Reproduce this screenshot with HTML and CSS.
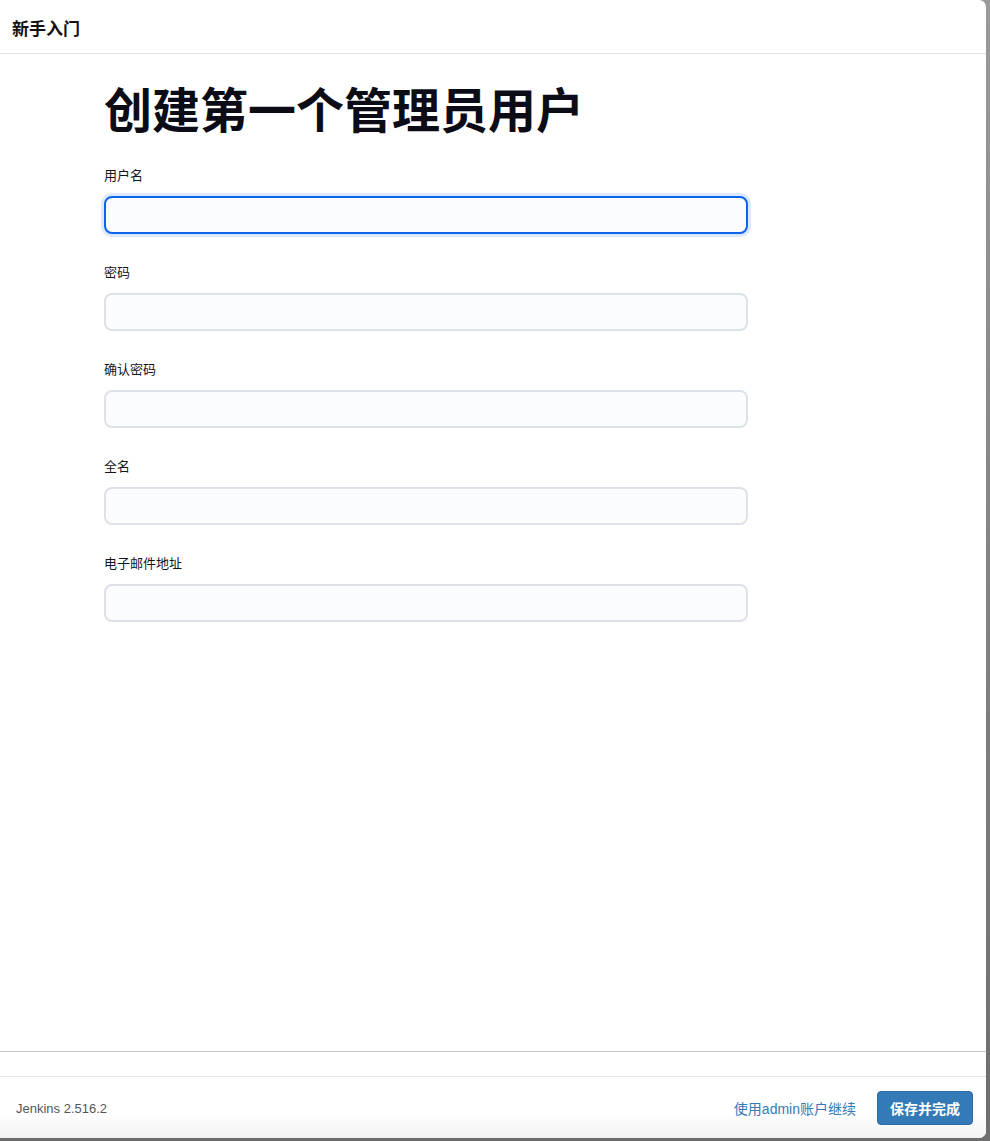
FILE: index.html
```html
<!DOCTYPE html>
<html lang="zh-CN">
<head>
<meta charset="utf-8">
<title>新手入门</title>
<link rel="stylesheet" href="styles.css">
</head>
<body>
<div class="dialog">
  <header class="dlg-header">新手入门</header>
  <main class="dlg-body">
    <h1 class="title">创建第一个管理员用户</h1>
    <form class="form">
      <div class="field">
        <label class="label">用户名</label>
        <input class="input focused" type="text">
      </div>
      <div class="field">
        <label class="label">密码</label>
        <input class="input" type="password">
      </div>
      <div class="field">
        <label class="label">确认密码</label>
        <input class="input" type="password">
      </div>
      <div class="field">
        <label class="label">全名</label>
        <input class="input" type="text">
      </div>
      <div class="field">
        <label class="label">电子邮件地址</label>
        <input class="input" type="text">
      </div>
    </form>
  </main>
  <div class="spacer"></div>
  <footer class="dlg-footer">
    <span class="version">Jenkins 2.516.2</span>
    <div class="actions">
      <a class="link" href="#">使用admin账户继续</a>
      <button class="btn" type="button">保存并完成</button>
    </div>
  </footer>
</div>
</body>
</html>
```
FILE: styles.css
```css
html, body {
  margin: 0;
  padding: 0;
}
body {
  width: 990px;
  height: 1141px;
  background: linear-gradient(#9a9a9a, #6e6e6e);
  font-family: "Liberation Sans", "Noto Sans CJK SC", sans-serif;
  overflow: hidden;
}
.dialog {
  width: 986px;
  height: 1138px;
  background: #fff;
  border-radius: 0 7px 7px 0;
  display: flex;
  flex-direction: column;
  overflow: hidden;
}
.dlg-header {
  height: 54px;
  box-sizing: border-box;
  border-bottom: 1px solid #e2e2e2;
  padding-left: 12px;
  display: flex;
  align-items: center;
  font-size: 17px;
  font-weight: 700;
  color: #111;
  padding-top: 2px;
}
.dlg-body {
  flex: 1;
  padding: 30px 0 0 104px;
  border-bottom: 1px solid #c9c9c9;
}
.title {
  margin: 0 0 26px;
  font-size: 48px;
  line-height: 56px;
  font-weight: 700;
  color: #0c0c16;
  letter-spacing: 0;
}
.form {
  display: flex;
  flex-direction: column;
  gap: 29px;
  width: 644px;
}
.field {
  display: flex;
  flex-direction: column;
  gap: 10px;
}
.label {
  font-size: 13px;
  line-height: 20px;
  color: #15151c;
}
.input {
  box-sizing: border-box;
  height: 38px;
  width: 644px;
  margin: 0;
  border: 2px solid #dde2e9;
  border-radius: 8px;
  background: #fbfcfe;
  outline: none;
  font-size: 14px;
  padding: 0 10px;
}
.input.focused {
  border-color: #0b64eb;
  box-shadow: 0 0 0 3px #dce9fc;
}
.spacer {
  height: 24px;
  border-bottom: 1px solid #e4e4e4;
}
.dlg-footer {
  height: 61px;
  display: flex;
  align-items: center;
  justify-content: space-between;
  padding: 0 13px 0 16px;
  background: linear-gradient(#fff 60%, #f3f3f3);
}
.version {
  font-size: 13px;
  color: #555;
  padding-top: 2px;
}
.actions {
  display: flex;
  align-items: center;
  gap: 21px;
}
.link {
  font-size: 14px;
  color: #337ab7;
  text-decoration: none;
}
.btn {
  height: 34px;
  width: 96px;
  border: 1px solid #2e6da4;
  border-radius: 4px;
  background: #337ab7;
  color: #fff;
  font-family: "Liberation Sans", "Noto Sans CJK SC", sans-serif;
  font-size: 14px;
  font-weight: 700;
  padding: 0;
  margin-top: 1px;
}
```
